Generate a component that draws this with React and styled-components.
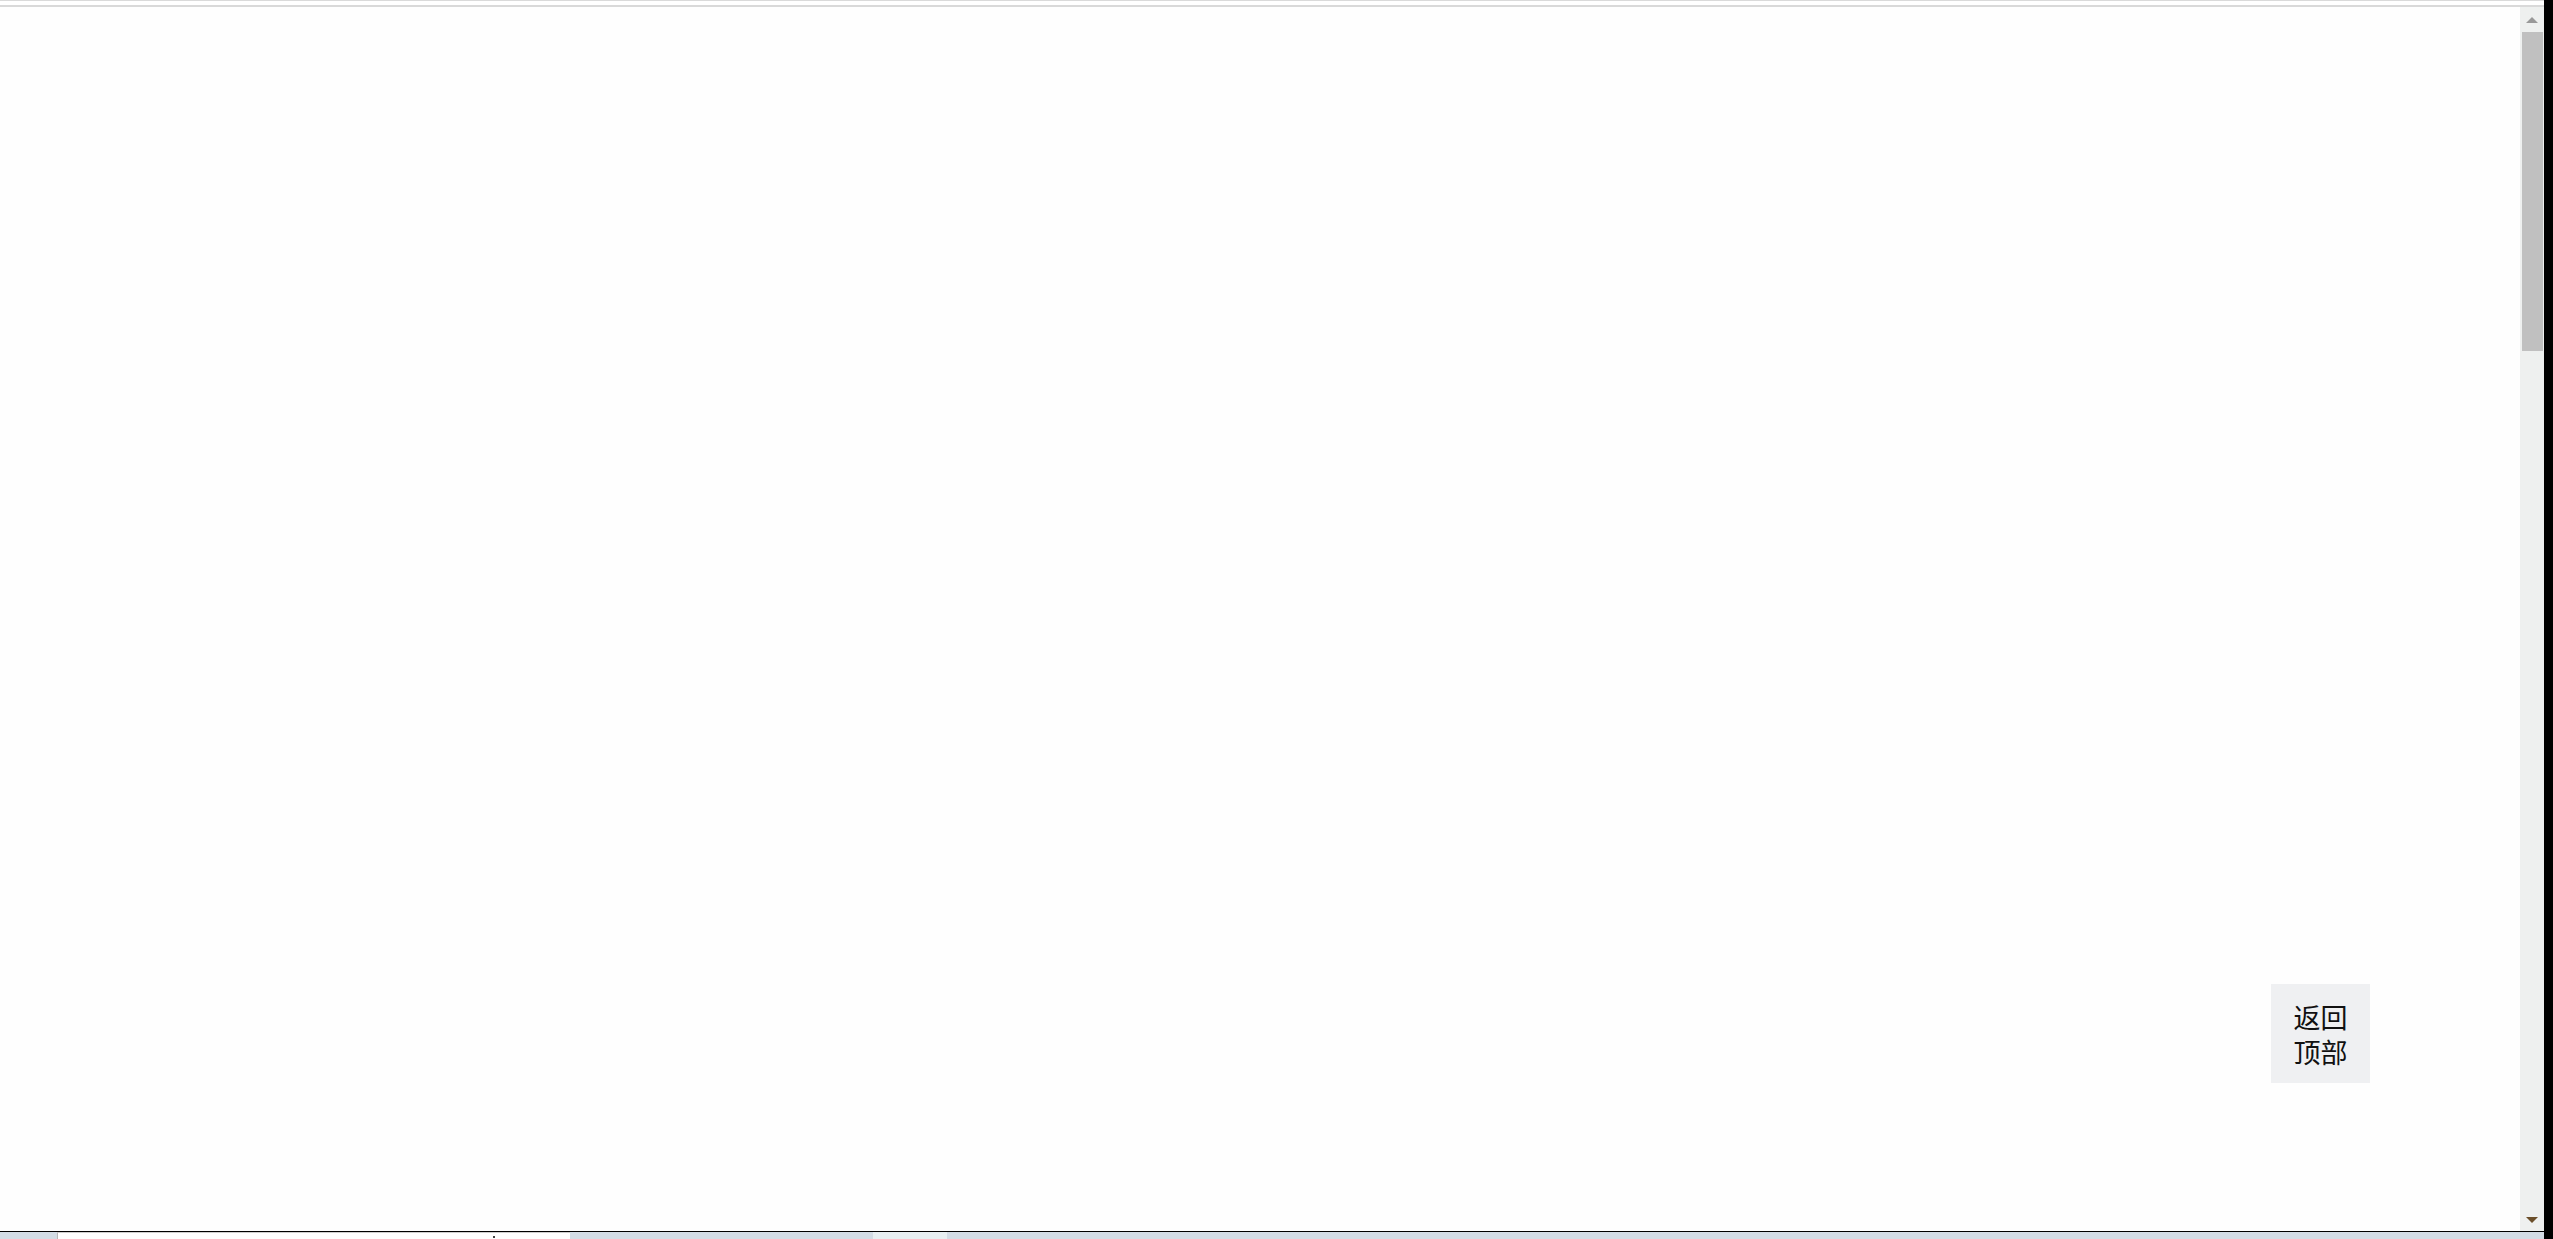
import React from "react";
import styled, { createGlobalStyle } from "styled-components";

const GlobalStyle = createGlobalStyle`
  html, body { margin: 0; padding: 0; background: #fff; }
  body { font-family: "Noto Sans CJK SC", "Noto Sans", sans-serif; overflow: hidden; }
`;

const Window = styled.div`
  display: flex;
  width: 2553px;
  height: 1239px;
`;

const Main = styled.div`
  flex: 1;
  display: flex;
  flex-direction: column;
  min-width: 0;
`;

const Edge = styled.div`
  width: 9px;
  background: #000;
`;

const TopRule = styled.div`
  height: ${p => p.h}px;
  margin-top: ${p => p.gap || 0}px;
  background: ${p => p.color};
`;

const Body = styled.div`
  flex: 1;
  display: flex;
`;

const Content = styled.div`
  flex: 1;
  position: relative;
  background: #fefefe;
`;

const BackTop = styled.button`
  position: absolute;
  right: 150px;
  bottom: 148px;
  width: 99px;
  height: 99px;
  border: 0;
  padding: 0;
  background: #eff0f2;
  color: #111;
  font-family: "Noto Sans CJK SC", sans-serif;
  font-size: 27px;
  line-height: 35px;
  display: flex;
  align-items: center;
  justify-content: center;
  text-align: center;
`;

const Scrollbar = styled.div`
  width: 24px;
  background: #eef0ef;
  display: flex;
  flex-direction: column;
  align-items: center;
`;

const Arrow = styled.div`
  width: 0;
  height: 0;
  border-left: 6px solid transparent;
  border-right: 6px solid transparent;
  ${p => p.down
    ? `border-top: 6px solid #6b4f2a; margin-top: auto; margin-bottom: 8px;`
    : `border-bottom: 6px solid #999; margin-top: 10px;`}
`;

const Thumb = styled.div`
  width: 21px;
  height: 319px;
  margin-top: 9px;
  margin-left: 1px;
  background: #c0c0c0;
`;

const BottomRule = styled.div`
  height: 1px;
  background: #000;
`;

const Strip = styled.div`
  height: 7px;
  background: #d3dce5;
  display: flex;
`;

const Tab = styled.div`
  width: ${p => p.w}px;
  margin-left: ${p => p.ml}px;
  background: ${p => p.bg};
  ${p => p.active && `border-left: 1px solid #b8b8b8; border-top: 1px solid #cfcfcf; box-sizing: border-box;`}
  position: relative;
`;

const Mark = styled.span`
  position: absolute;
  left: 435px;
  bottom: 1px;
  width: 2px;
  height: 2px;
  background: #444;
`;

export default function App() {
  return (
    <>
      <GlobalStyle />
      <Window>
        <Main>
          <TopRule h={1} color="#dadada" />
          <TopRule h={2} gap={4} color="#d9d9d9" />
          <Body>
            <Content>
              <BackTop>
                返回
                <br />
                顶部
              </BackTop>
            </Content>
            <Scrollbar>
              <Arrow />
              <Thumb />
              <Arrow down />
            </Scrollbar>
          </Body>
          <BottomRule />
          <Strip>
            <Tab w={513} ml={57} bg="#fff" active>
              <Mark />
            </Tab>
            <Tab w={74} ml={303} bg="#e8eff2" />
          </Strip>
        </Main>
        <Edge />
      </Window>
    </>
  );
}
